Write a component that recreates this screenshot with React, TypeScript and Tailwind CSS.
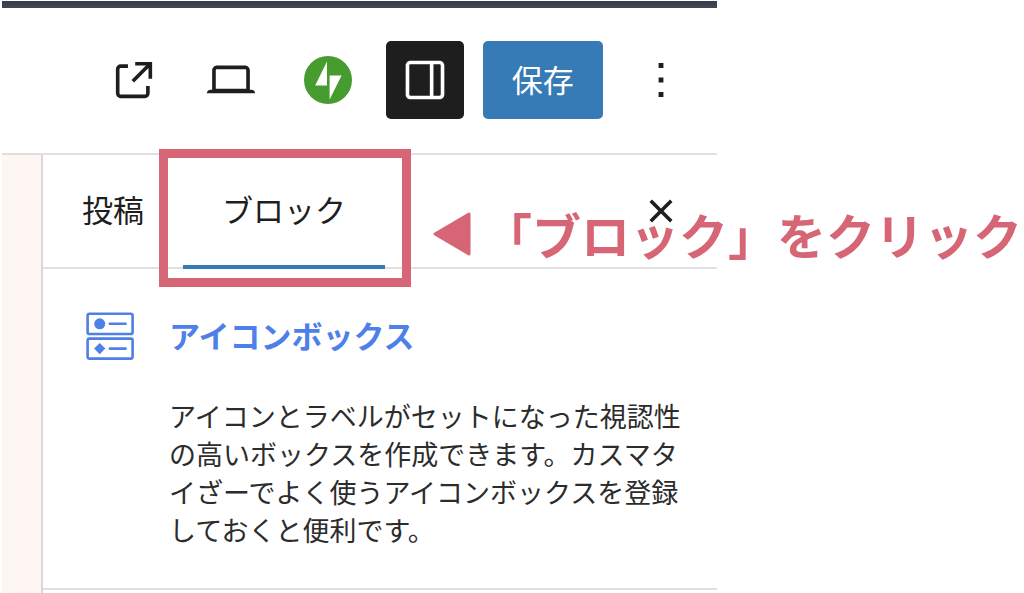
import { useState } from 'react';

type Tab = 'post' | 'block';

const font = "font-['Noto_Sans_CJK_JP',sans-serif]";

function ExternalIcon() {
  return (
    <svg viewBox="0 0 24 24" className="size-[58px]" fill="currentColor" aria-hidden="true">
      <path d="M19.5 4.5h-7V6h4.44l-5.97 5.97 1.06 1.06L18 7.06v4.44h1.5v-7Zm-13 1a2 2 0 0 0-2 2v10a2 2 0 0 0 2 2h10a2 2 0 0 0 2-2v-3H17v3a.5.5 0 0 1-.5.5h-10a.5.5 0 0 1-.5-.5v-10a.5.5 0 0 1 .5-.5h3V5.5h-3Z" />
    </svg>
  );
}

function DesktopIcon() {
  return (
    <svg viewBox="0 0 24 24" className="size-[58px]" fill="currentColor" aria-hidden="true">
      <path d="M20.5 16h-.7V8c0-1.1-.9-2-2-2H6.2c-1.1 0-2 .9-2 2v8h-.7c-.8 0-1.5.7-1.5 1.5h20c0-.8-.7-1.5-1.5-1.5zM5.7 8c0-.3.2-.5.5-.5h11.6c.3 0 .5.2.5.5v7.6H5.7V8z" />
    </svg>
  );
}

function JetpackIcon() {
  return (
    <svg viewBox="0 0 48 48" className="size-12" aria-hidden="true">
      <circle cx="24" cy="24" r="24" fill="#479c2f" />
      <path d="M23 5.5v24H11.2zM25.6 19.5h12l-12 24z" fill="#fff" />
    </svg>
  );
}

function DrawerIcon() {
  return (
    <svg viewBox="0 0 24 24" className="size-[58px]" fill="currentColor" aria-hidden="true">
      <path d="M18 4H6c-1.1 0-2 .9-2 2v12c0 1.1.9 2 2 2h12c1.1 0 2-.9 2-2V6c0-1.1-.9-2-2-2zm-4 14.5H6c-.3 0-.5-.2-.5-.5V6c0-.3.2-.5.5-.5h8v13zm4.5-.5c0 .3-.2.5-.5.5h-2.5v-13H18c.3 0 .5.2.5.5v12z" />
    </svg>
  );
}

function MoreIcon() {
  return (
    <svg viewBox="0 0 24 24" className="size-[58px]" fill="currentColor" aria-hidden="true">
      <path d="M13 19h-2v-2h2v2zm0-6h-2v-2h2v2zm0-6h-2V5h2v2z" />
    </svg>
  );
}

function CloseIcon() {
  return (
    <svg viewBox="0 0 24 24" className="size-[58px]" fill="currentColor" aria-hidden="true">
      <path d="M12 13.06l3.712 3.713 1.061-1.06L13.061 12l3.712-3.712-1.06-1.06L12 10.938 8.288 7.227l-1.061 1.06L10.939 12l-3.712 3.712 1.06 1.061L12 13.061z" />
    </svg>
  );
}

function IconBoxIcon() {
  return (
    <svg viewBox="0 0 48 48" className="size-12 shrink-0" fill="none" stroke="#4f7fe8" strokeWidth="2.6" aria-hidden="true">
      <rect x="1.6" y="1.8" width="45" height="20.2" rx="1.8" />
      <rect x="1.6" y="26.6" width="45" height="20" rx="1.8" />
      <circle cx="13.7" cy="11.8" r="5.5" fill="#4f7fe8" stroke="none" />
      <path d="M13.7 31l5.6 5.6-5.6 5.6-5.6-5.6z" fill="#4f7fe8" stroke="none" />
      <path d="M23.8 11.8h15.8M23.8 36.6h15.8" strokeLinecap="round" />
    </svg>
  );
}

const iconButton = 'flex size-[78px] shrink-0 items-center justify-center rounded-[5px]';
const tabButton = 'h-full px-[39px] pb-1';

export default function App() {
  const [tab, setTab] = useState<Tab>('block');
  const [open, setOpen] = useState(true);

  return (
    <div className={`min-h-screen overflow-hidden bg-white text-[#1e1e1e] ${font}`}>
      <div className="flex min-h-screen w-[70%] flex-col pt-px pl-0.5">
        <div className="h-[7px] bg-linear-to-b from-[#2f3f4e] to-[#474650]" />

        {/* Editor toolbar */}
        <header className="flex h-[147px] items-center justify-end gap-[19px] border-b-2 border-[#e0e0e0] pr-[17px] pb-px">
          <button aria-label="投稿を表示" className={iconButton}>
            <ExternalIcon />
          </button>
          <button aria-label="表示" className={iconButton}>
            <DesktopIcon />
          </button>
          <button aria-label="Jetpack" className={iconButton}>
            <JetpackIcon />
          </button>
          <button
            aria-label="設定"
            aria-pressed={open}
            onClick={() => setOpen(!open)}
            className={`${iconButton} bg-[#1e1e1e] text-white`}
          >
            <DrawerIcon />
          </button>
          <button className="h-[78px] shrink-0 rounded-[5px] bg-[#367ab6] px-[29px] pb-0.5 text-[31px] text-white">保存</button>
          <button aria-label="オプション" className={iconButton}>
            <MoreIcon />
          </button>
        </header>

        <div className="flex grow">
          {/* Edge of the canvas */}
          <div className="w-[41px] shrink-0 border-r-2 border-[#dcd6d4] bg-[#fef6f2]" />

          {open && (
            <aside className="min-w-0 grow">
              <div className="relative flex h-[114px] items-center border-b-2 border-[#e0e0e0] text-[31px]">
                <div role="tablist" className="flex h-full">
                  <button role="tab" aria-selected={tab === 'post'} onClick={() => setTab('post')} className={tabButton}>
                    投稿
                  </button>
                  <div className="relative">
                    <button role="tab" aria-selected={tab === 'block'} onClick={() => setTab('block')} className={tabButton}>
                      ブロック
                    </button>
                    {tab === 'block' && <span className="absolute inset-x-0 -bottom-0.5 h-1 bg-[#367ab6]" />}
                    {/* Highlight frame round the tab */}
                    <span className="pointer-events-none absolute -top-1.5 -right-[26px] -bottom-5 -left-6 border-[9px] border-[#d66575]" />
                  </div>
                </div>
                <button aria-label="設定を閉じる" onClick={() => setOpen(false)} className={`${iconButton} mr-[17px] ml-auto`}>
                  <CloseIcon />
                </button>

                <p className="pointer-events-none absolute top-14 left-[390px] flex items-center gap-3 text-[49px] leading-[46px] font-bold whitespace-nowrap text-[#d66575]">
                  <svg viewBox="0 0 38 44" className="h-11 w-[38px]" aria-hidden="true">
                    <path d="M36 2v40L2 22z" fill="#d66575" stroke="#d66575" strokeWidth="3" strokeLinejoin="round" />
                  </svg>
                  「ブロック」をクリック
                </p>
              </div>

              <section className="flex gap-[35px] border-b-2 border-[#e0e0e0] pt-[43px] pr-6 pb-[39px] pl-[43px]">
                <IconBoxIcon />
                <div>
                  <h2 className="mb-[39px] text-[31px] leading-[46px] font-bold text-[#4f7fe8]">アイコンボックス</h2>
                  <p className="text-[27px] leading-[38px] text-[#2c2c2c]">
                    アイコンとラベルがセットになった視認性の高いボックスを作成できます。カスマタイざーでよく使うアイコンボックスを登録しておくと便利です。
                  </p>
                </div>
              </section>
            </aside>
          )}
        </div>
      </div>
    </div>
  );
}
